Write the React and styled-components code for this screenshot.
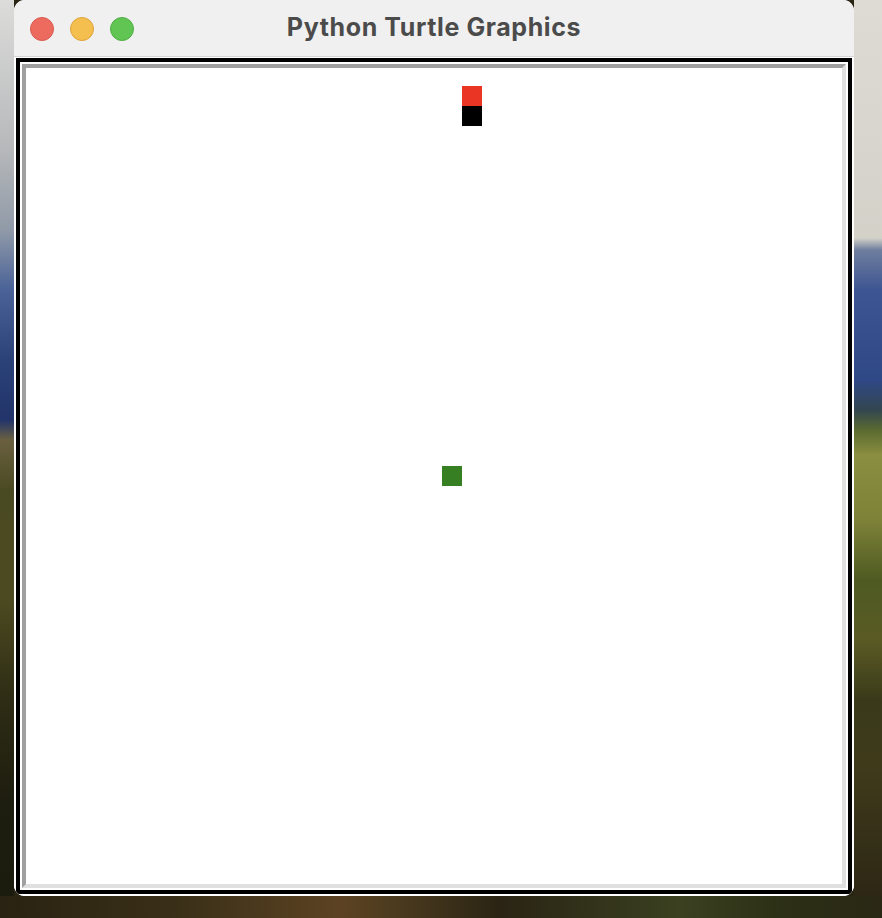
import styled, { createGlobalStyle } from 'styled-components'

const GlobalStyle = createGlobalStyle`
  html, body {
    margin: 0;
    padding: 0;
    background: #1f1c10;
  }

  * {
    box-sizing: border-box;
  }
`

const Desktop = styled.div`
  width: 882px;
  height: 918px;
  padding-left: 14px;
  overflow: hidden;
  background:
    linear-gradient(
        90deg,
        #2a2212 0px,
        #3a3018 180px,
        #5c4222 340px,
        #4a3a1e 400px,
        #2a2414 500px,
        #3a4020 680px,
        #2c3016 780px,
        #2a2814 882px
      )
      left bottom / 100% 22px no-repeat,
    linear-gradient(
        180deg,
        #dddbd3 0px,
        #d3d1c8 238px,
        #6f7e9e 250px,
        #3d5592 290px,
        #2f4886 380px,
        #334650 410px,
        #5a6a30 430px,
        #8a8e40 455px,
        #7e8238 520px,
        #4e5a22 580px,
        #5a5a24 640px,
        #3a3a1a 700px,
        #3e3a1a 770px,
        #2a2414 918px
      )
      right top / 28px 100% no-repeat,
    linear-gradient(
        180deg,
        #dcdcda 0px,
        #b6b8ba 150px,
        #909aa8 230px,
        #4a6298 290px,
        #2a4278 360px,
        #22346a 420px,
        #6a6040 440px,
        #4a4a22 490px,
        #4c4a20 600px,
        #2e2c14 700px,
        #1e1e10 800px,
        #1a1a0e 918px
      )
      left top / 14px 100% no-repeat,
    #2a2414;
`

const Window = styled.div`
  width: 840px;
  height: 896px;
  border-radius: 11px;
  overflow: hidden;
  background: #ffffff;
  display: flex;
  flex-direction: column;
`

const TitleBar = styled.div`
  height: 57px;
  flex-shrink: 0;
  display: grid;
  grid-template-columns: 1fr auto 1fr;
  align-items: center;
  background: #f0f0f0;
  border-bottom: 1px solid #d5d5d5;
`

const Lights = styled.div`
  display: flex;
  gap: 16px;
  padding-left: 16px;
  padding-top: 1px;
`

const Light = styled.span`
  width: 24px;
  height: 24px;
  border-radius: 50%;
  background: ${(props) => props.$fill};
  border: 1px solid ${(props) => props.$edge};
`

const Title = styled.h1`
  margin: 0 0 2px 0;
  font-family: Inter, 'Liberation Sans', sans-serif;
  font-size: 25px;
  font-weight: 700;
  line-height: 1;
  color: #4b4b4b;
  letter-spacing: 0.6px;
  white-space: nowrap;
`

const Content = styled.div`
  flex: 1;
  padding: 1px 2px 2px 2px;
  background: #ffffff;
`

const Frame = styled.div`
  border: 4px solid #000000;
  padding: 2px;
  background: #ffffff;
`

const Canvas = styled.div`
  position: relative;
  width: 824px;
  height: 824px;
  border: 4px solid;
  border-color: #a0a0a0 #e0e0e0 #e0e0e0 #a0a0a0;
  background: #ffffff;
`

const Square = styled.div`
  position: absolute;
  width: 20px;
  height: 20px;
  background: ${(props) => props.$color};
`

const squares = [
  { id: 'food', color: '#ea3424', x: 436, y: 18 },
  { id: 'head', color: '#000000', x: 436, y: 38 },
  { id: 'player', color: '#367f22', x: 416, y: 398 }
]

function App() {
  return (
    <>
      <GlobalStyle />
      <Desktop>
        <Window>
          <TitleBar>
            <Lights>
              <Light $fill="#ed6a5e" $edge="#d85a4f" />
              <Light $fill="#f5bf4f" $edge="#dea43c" />
              <Light $fill="#61c554" $edge="#52ad45" />
            </Lights>
            <Title>Python Turtle Graphics</Title>
            <div />
          </TitleBar>
          <Content>
            <Frame>
              <Canvas>
                {squares.map((square) => (
                  <Square
                    key={square.id}
                    $color={square.color}
                    style={{ left: square.x, top: square.y }}
                  />
                ))}
              </Canvas>
            </Frame>
          </Content>
        </Window>
      </Desktop>
    </>
  )
}

export default App
